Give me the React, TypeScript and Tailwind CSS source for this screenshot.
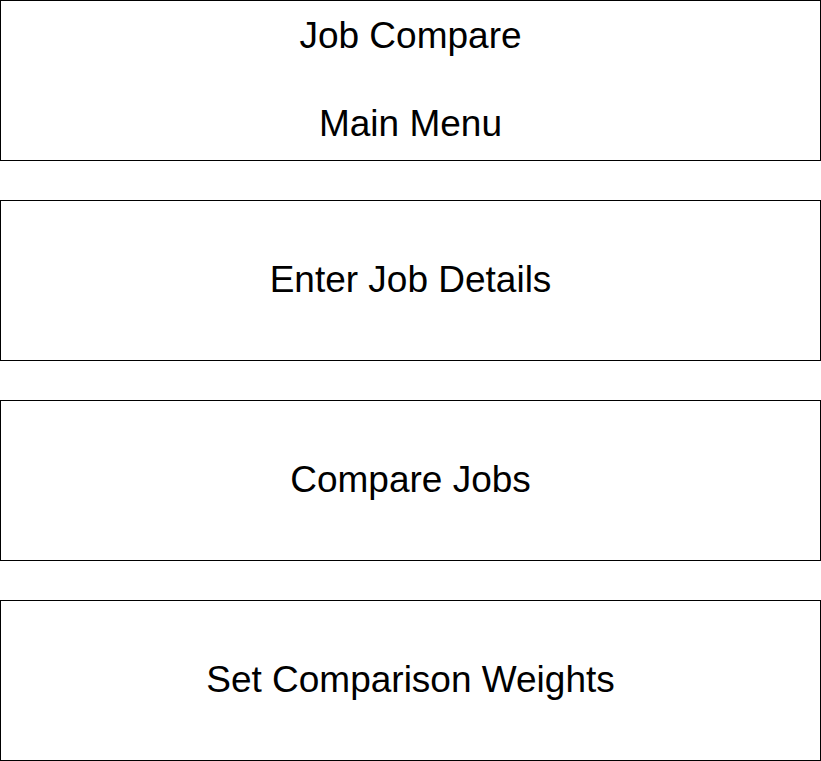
import React from "react";

const MenuBox: React.FC<{ children: React.ReactNode }> = ({ children }) => (
  <div className="w-[821px] h-[161px] border border-black bg-white flex items-center justify-center text-center text-[37px] leading-[44px] text-black">
    <div className="-mt-[2px]">{children}</div>
  </div>
);

export default function App() {
  return (
    <div
      className="w-[821px] h-[761px] bg-white flex flex-col gap-[39px]"
      style={{ fontFamily: '"Liberation Sans", Arial, sans-serif' }}
    >
      <MenuBox>
        <div>Job Compare</div>
        <div>&nbsp;</div>
        <div>Main Menu</div>
      </MenuBox>
      <MenuBox>Enter Job Details</MenuBox>
      <MenuBox>Compare Jobs</MenuBox>
      <MenuBox>Set Comparison Weights</MenuBox>
    </div>
  );
}
